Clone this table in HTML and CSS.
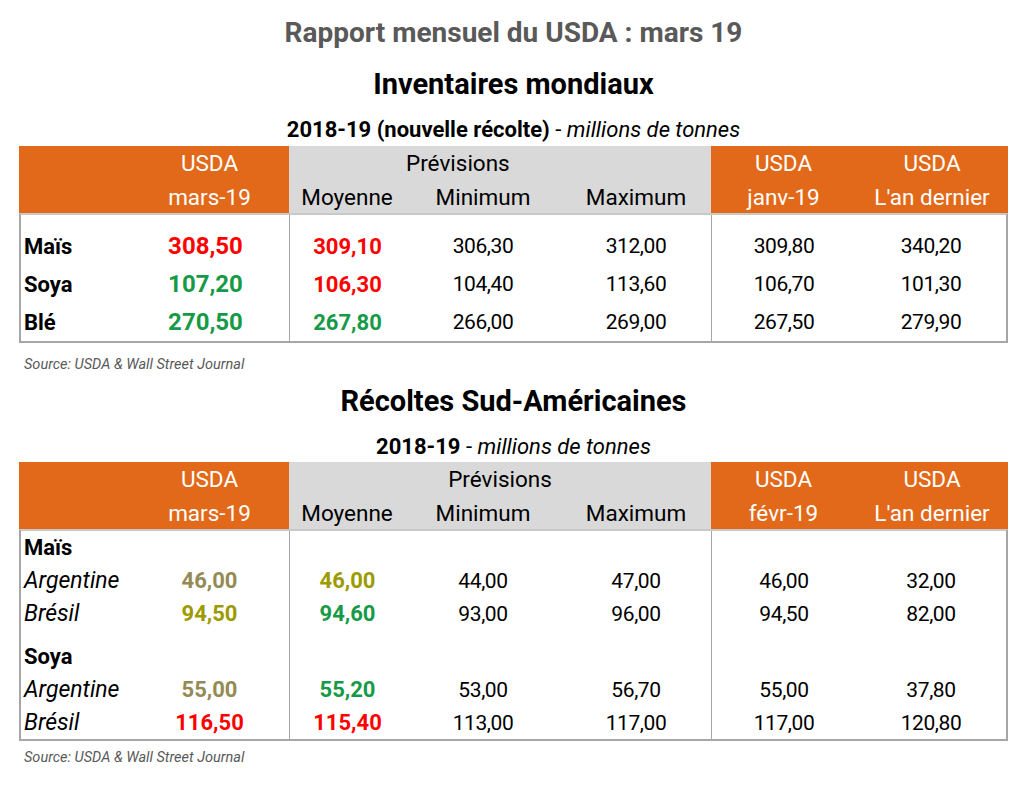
FILE: index.html
```html
<!DOCTYPE html>
<html lang="fr">
<head>
<meta charset="utf-8">
<title>Rapport mensuel du USDA : mars 19</title>
<link rel="stylesheet" href="styles.css">
</head>
<body>
<main class="page">
  <h1 class="title">Rapport mensuel du USDA : mars 19</h1>

  <h2 class="section first">Inventaires mondiaux</h2>
  <p class="sub"><b>2018-19 (nouvelle récolte)</b> - <i>millions de tonnes</i></p>

  <div class="tbl t1">
    <div class="hrow r1">
      <div class="c o"></div>
      <div class="c o">USDA</div>
      <div class="c g span3 left">Prévisions</div>
      <div class="c o">USDA</div>
      <div class="c o">USDA</div>
    </div>
    <div class="hrow r2">
      <div class="c o"></div>
      <div class="c o">mars-19</div>
      <div class="c g">Moyenne</div>
      <div class="c g">Minimum</div>
      <div class="c g">Maximum</div>
      <div class="c o">janv-19</div>
      <div class="c o">L'an dernier</div>
    </div>
    <div class="tbody">
      <div class="brow big lead">
        <div class="c lbl">Maïs</div>
        <div class="c v main red">308,50</div>
        <div class="c v avg red vl">309,10</div>
        <div class="c v">306,30</div>
        <div class="c v">312,00</div>
        <div class="c v vl">309,80</div>
        <div class="c v">340,20</div>
      </div>
      <div class="brow big">
        <div class="c lbl">Soya</div>
        <div class="c v main green">107,20</div>
        <div class="c v avg red vl">106,30</div>
        <div class="c v">104,40</div>
        <div class="c v">113,60</div>
        <div class="c v vl">106,70</div>
        <div class="c v">101,30</div>
      </div>
      <div class="brow big">
        <div class="c lbl">Blé</div>
        <div class="c v main green">270,50</div>
        <div class="c v avg green vl">267,80</div>
        <div class="c v">266,00</div>
        <div class="c v">269,00</div>
        <div class="c v vl">267,50</div>
        <div class="c v">279,90</div>
      </div>
    </div>
  </div>
  <p class="source">Source: USDA &amp; Wall Street Journal</p>

  <h2 class="section second">Récoltes Sud-Américaines</h2>
  <p class="sub sub2"><b>2018-19</b> - <i>millions de tonnes</i></p>

  <div class="tbl t2">
    <div class="hrow r1">
      <div class="c o"></div>
      <div class="c o">USDA</div>
      <div class="c g span3">Prévisions</div>
      <div class="c o">USDA</div>
      <div class="c o">USDA</div>
    </div>
    <div class="hrow r2">
      <div class="c o"></div>
      <div class="c o">mars-19</div>
      <div class="c g">Moyenne</div>
      <div class="c g">Minimum</div>
      <div class="c g">Maximum</div>
      <div class="c o">févr-19</div>
      <div class="c o">L'an dernier</div>
    </div>
    <div class="tbody">
      <div class="brow small">
        <div class="c lbl">Maïs</div>
        <div class="c"></div>
        <div class="c vl"></div>
        <div class="c"></div>
        <div class="c"></div>
        <div class="c vl"></div>
        <div class="c"></div>
      </div>
      <div class="brow small">
        <div class="c lbl it">Argentine</div>
        <div class="c v b2 khaki">46,00</div>
        <div class="c v b2 olive vl">46,00</div>
        <div class="c v">44,00</div>
        <div class="c v">47,00</div>
        <div class="c v vl">46,00</div>
        <div class="c v">32,00</div>
      </div>
      <div class="brow small">
        <div class="c lbl it">Brésil</div>
        <div class="c v b2 olive">94,50</div>
        <div class="c v b2 green vl">94,60</div>
        <div class="c v">93,00</div>
        <div class="c v">96,00</div>
        <div class="c v vl">94,50</div>
        <div class="c v">82,00</div>
      </div>
      <div class="brow small gap">
        <div class="c lbl">Soya</div>
        <div class="c"></div>
        <div class="c vl"></div>
        <div class="c"></div>
        <div class="c"></div>
        <div class="c vl"></div>
        <div class="c"></div>
      </div>
      <div class="brow small">
        <div class="c lbl it">Argentine</div>
        <div class="c v b2 khaki">55,00</div>
        <div class="c v b2 green vl">55,20</div>
        <div class="c v">53,00</div>
        <div class="c v">56,70</div>
        <div class="c v vl">55,00</div>
        <div class="c v">37,80</div>
      </div>
      <div class="brow small">
        <div class="c lbl it">Brésil</div>
        <div class="c v b2 red">116,50</div>
        <div class="c v b2 red vl">115,40</div>
        <div class="c v">113,00</div>
        <div class="c v">117,00</div>
        <div class="c v vl">117,00</div>
        <div class="c v">120,80</div>
      </div>
    </div>
  </div>
  <p class="source source2">Source: USDA &amp; Wall Street Journal</p>
</main>
</body>
</html>
```

FILE: styles.css
```css
* {
  box-sizing: border-box;
}

body {
  margin: 0;
  background: #ffffff;
  font-family: Roboto, "Liberation Sans", Arial, sans-serif;
  color: #000000;
}

.page {
  width: 989px;
  margin-left: 19px;
  padding-top: 16px;
}

.title {
  margin: 0;
  height: 34px;
  line-height: 34px;
  font-size: 28px;
  font-weight: 700;
  color: #595959;
  text-align: center;
}

.section {
  margin: 17px 0 0;
  height: 34px;
  line-height: 34px;
  font-size: 29px;
  font-weight: 700;
  text-align: center;
}

.section.second {
  margin-top: 11px;
}

.sub {
  margin: 17px 0 0;
  height: 24px;
  line-height: 24px;
  font-size: 22px;
  text-align: center;
}

.sub b {
  font-weight: 700;
}

.sub i {
  font-style: italic;
}

.tbl {
  margin-top: 4px;
}

.t2 {
  margin-top: 3px;
}

.hrow,
.brow {
  display: grid;
}

.hrow {
  grid-template-columns: 111px 159px 116px 156px 150px 145px 152px;
  font-size: 22.5px;
}

.hrow.r1 {
  height: 34px;
}

.hrow.r2 {
  height: 33px;
}

.c {
  display: flex;
  align-items: center;
  justify-content: center;
  white-space: nowrap;
}

.o {
  background: #e2691a;
  color: #ffffff;
}

.g {
  background: #d9d9d9;
  color: #000000;
}

.span3 {
  grid-column: span 3;
}

.left {
  justify-content: flex-start;
  padding-left: 117px;
}

.tbody {
  border: 2px solid #a6a6a6;
  border-top-color: #c8c8c8;
}

.brow {
  grid-template-columns: 109px 159px 116px 156px 150px 145px 150px;
}

.brow.big {
  height: 38px;
}

.brow.big.lead {
  height: 50px;
}

.brow.big.lead .c {
  padding-top: 12px;
}

.brow.small {
  height: 33px;
}

.brow.small.gap {
  height: 43px;
}

.brow.small.gap .c {
  padding-top: 10px;
}

.vl {
  border-left: 1px solid #a6a6a6;
}

.lbl {
  justify-content: flex-start;
  padding-left: 3px;
  font-size: 22px;
  font-weight: 700;
}

.lbl.it {
  font-size: 23px;
  font-weight: 400;
  font-style: italic;
}

.v {
  font-size: 21px;
  letter-spacing: -0.4px;
}

.v.main {
  font-size: 24px;
  font-weight: 700;
  letter-spacing: 0;
  padding-right: 8px;
}

.v.avg {
  font-size: 22px;
  font-weight: 700;
  letter-spacing: 0;
}

.v.b2 {
  font-size: 22px;
  font-weight: 700;
  letter-spacing: 0;
}

.red {
  color: #ff0000;
}

.green {
  color: #169a47;
}

.khaki {
  color: #948a54;
}

.olive {
  color: #9c9a00;
}

.source {
  margin: 14px 0 0 5px;
  height: 16px;
  line-height: 16px;
  font-size: 14.5px;
  font-style: italic;
  color: #595959;
}

.source2 {
  margin-top: 9px;
}
```
